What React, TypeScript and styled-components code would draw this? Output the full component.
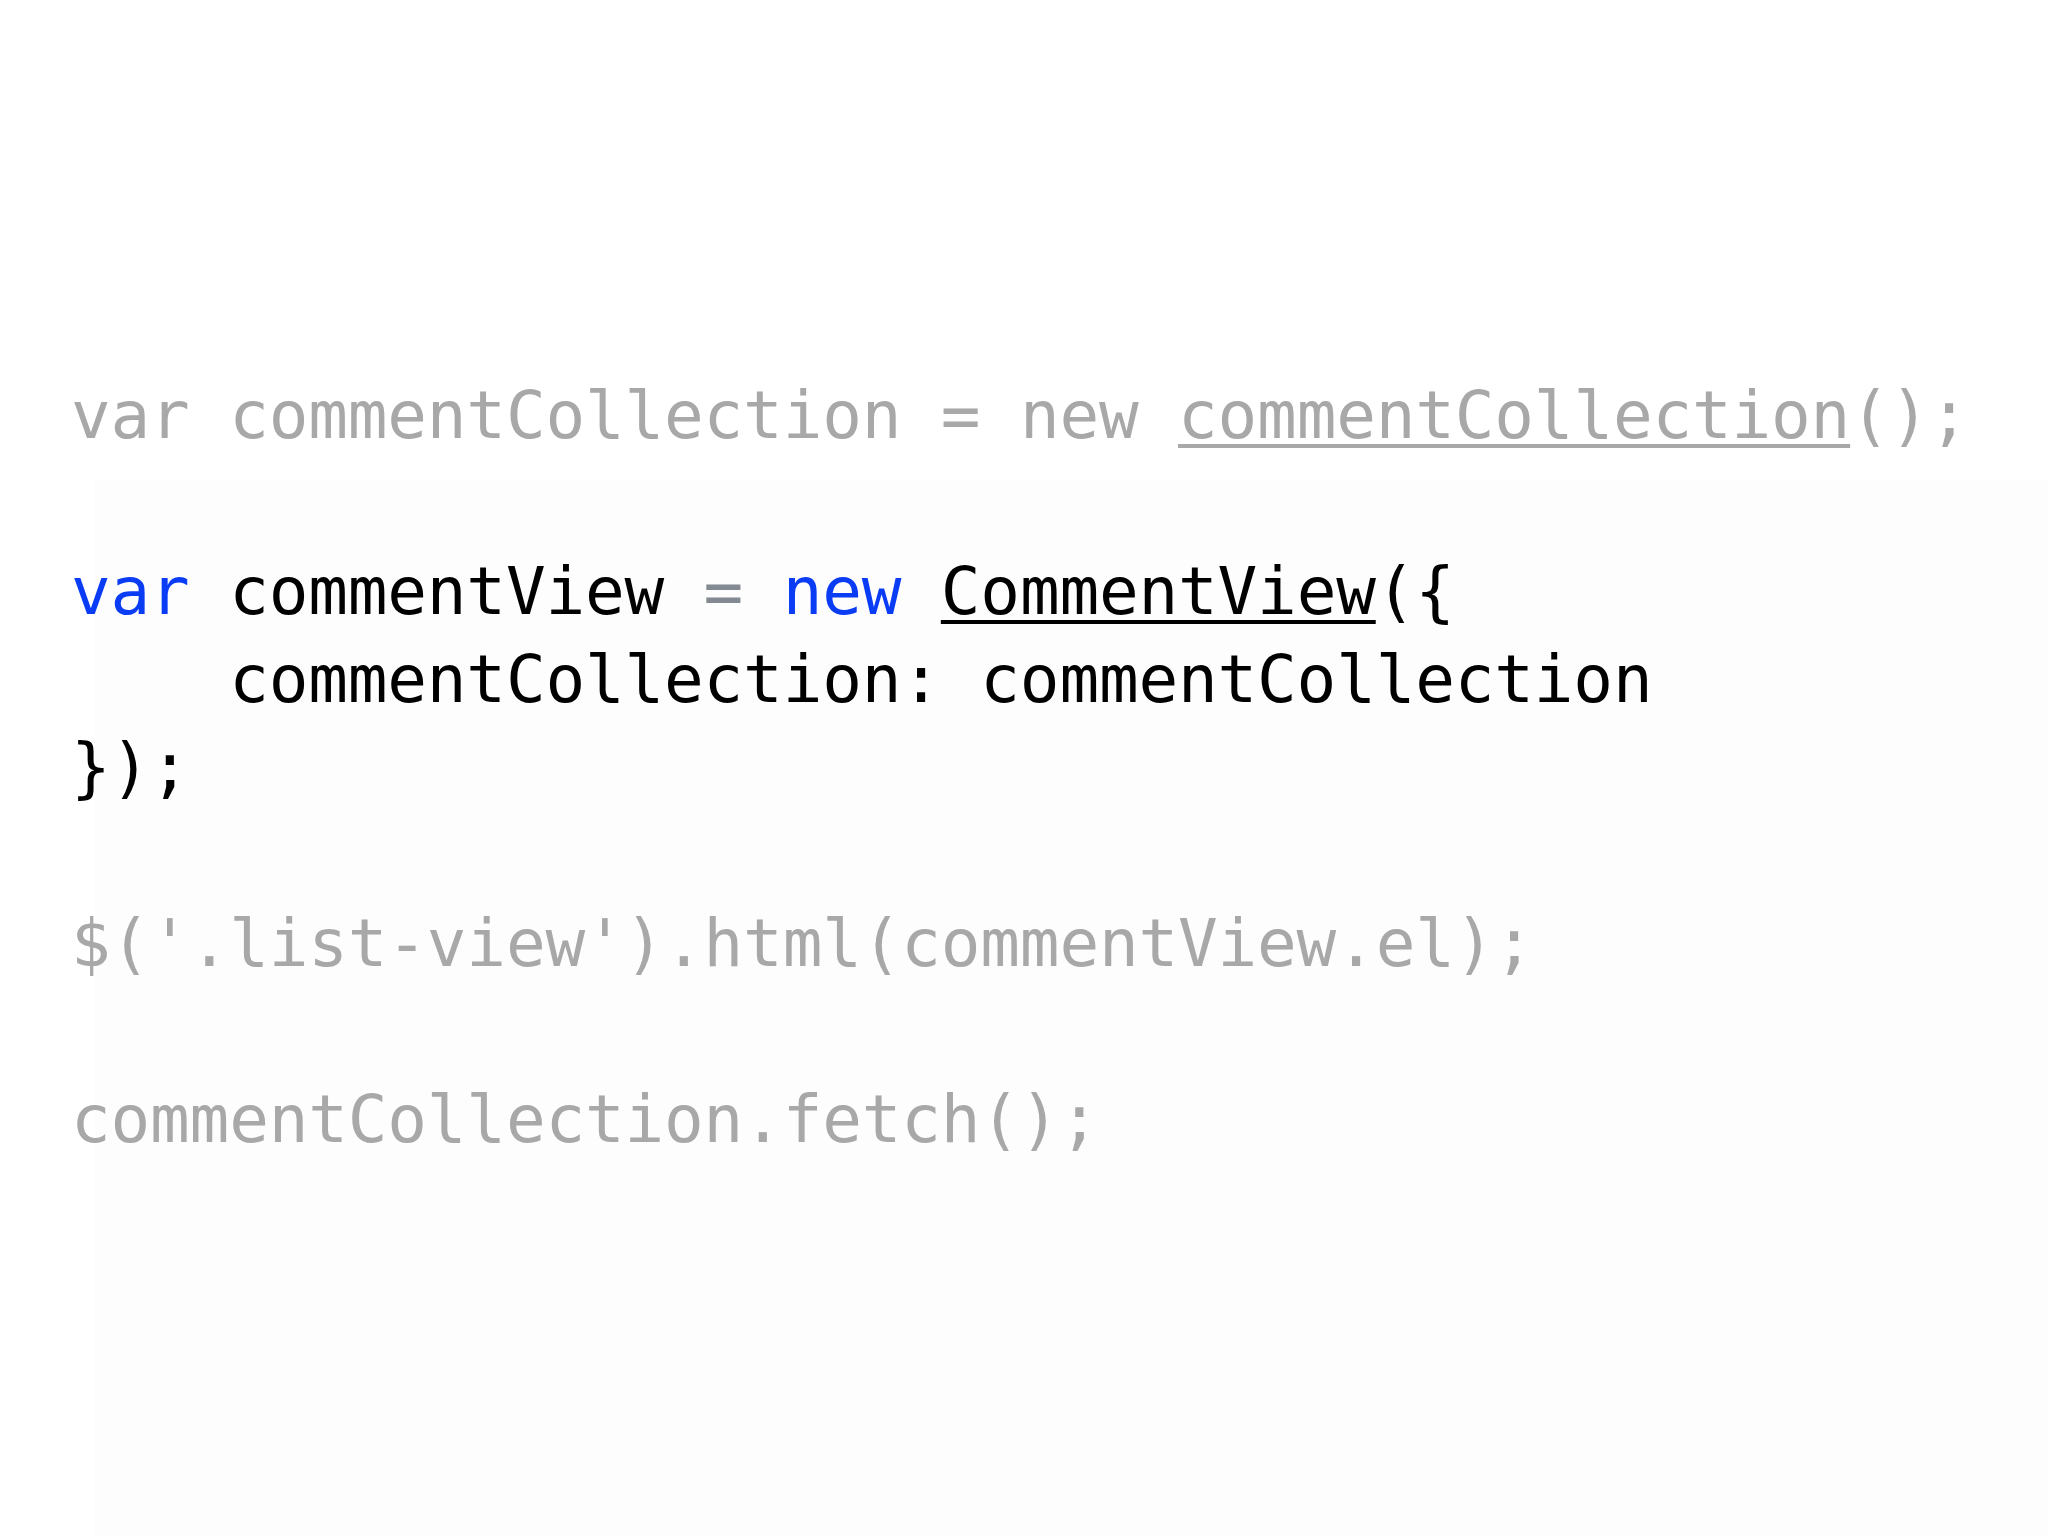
import React from "react";
import styled, { createGlobalStyle } from "styled-components";

const Global = createGlobalStyle`
  html, body {
    margin: 0;
    padding: 0;
    background: #ffffff;
  }
`;

const Page = styled.main`
  min-height: 1536px;
  box-sizing: border-box;
  padding: 372px 0 0 71px;
  background-color: #ffffff;
  background-image: linear-gradient(#fdfdfe, #fdfdfe);
  background-repeat: no-repeat;
  background-position: 95px 480px;
  background-size: calc(100% - 95px) calc(100% - 480px);
`;

const Code = styled.pre`
  margin: 0;
  font-family: "DejaVu Sans Mono", "Liberation Mono", monospace;
  font-size: 66px;
  letter-spacing: -0.2px;
  line-height: 88px;
  white-space: pre;
`;

const Line = styled.div`
  height: 88px;
`;

type Tone = "dim" | "kw" | "ink" | "op";

const toneColor: Record<Tone, string> = {
  dim: "#a8a8a8",
  kw: "#0a3cf5",
  ink: "#000000",
  op: "#848a92",
};

const Tok = styled.span<{ $tone: Tone; $link?: boolean }>`
  color: ${(p) => toneColor[p.$tone]};
  text-decoration: ${(p) => (p.$link ? "underline" : "none")};
  text-decoration-thickness: 4px;
  text-underline-offset: 6px;
`;

type T = [string, Tone, boolean?];

const lines: T[][] = [
  [
    ["var ", "dim"],
    ["commentCollection ", "dim"],
    ["= ", "dim"],
    ["new ", "dim"],
    ["commentCollection", "dim", true],
    ["();", "dim"],
  ],
  [],
  [
    ["var ", "kw"],
    ["commentView ", "ink"],
    ["= ", "op"],
    ["new ", "kw"],
    ["CommentView", "ink", true],
    ["({", "ink"],
  ],
  [["    commentCollection: commentCollection", "ink"]],
  [["});", "ink"]],
  [],
  [["$('.list-view').html(commentView.el);", "dim"]],
  [],
  [["commentCollection.fetch();", "dim"]],
];

export default function App() {
  return (
    <>
      <Global />
      <Page>
        <Code>
          {lines.map((line, i) => (
            <Line key={i}>
              {line.map(([text, tone, link], j) => (
                <Tok key={j} $tone={tone} $link={link}>
                  {text}
                </Tok>
              ))}
            </Line>
          ))}
        </Code>
      </Page>
    </>
  );
}
